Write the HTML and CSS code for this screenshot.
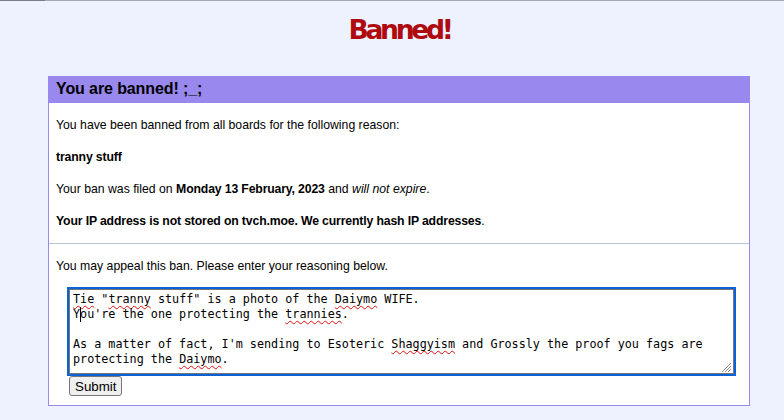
FILE: index.html
```
<!DOCTYPE html>
<html lang="en">
<head>
  <meta charset="UTF-8">
  <meta name="viewport" content="width=device-width, initial-scale=1.0">
  <title>Banned!</title>
  <link rel="stylesheet" href="styles.css">
</head>
<body>
  <div class="page">
    <header class="page-header">
      <h1>Banned!</h1>
    </header>

    <div class="ban">
      <h2>You are banned! ;_;</h2>
      <p>You have been banned from all boards for the following reason:</p>
      <p class="reason">tranny stuff</p>
      <p>Your ban was filed on <strong>Monday 13 February, 2023</strong> and <em>will not expire</em>.</p>
      <p><strong>Your IP address is not stored on tvch.moe. We currently hash IP addresses</strong>.</p>

      <hr>

      <p>You may appeal this ban. Please enter your reasoning below.</p>

      <form class="ban-appeal" onsubmit="return false">
        <div class="appeal-box" role="textbox" aria-multiline="true" contenteditable="true" spellcheck="true"><span class="typo">Tie</span> "<span class="typo">tranny</span> stuff" is a photo of the <span class="typo">Daiymo</span> WIFE.
Y<span class="caret"></span>ou're the one protecting the <span class="typo">trannies</span>.

As a matter of fact, I'm sending to Esoteric <span class="typo">Shaggyism</span> and Grossly the proof you fags are protecting the <span class="typo">Daiymo</span>.</div>
        <svg class="grip" width="12" height="12" viewBox="0 0 12 12">
          <path d="M11 2 L2 11 M11 5 L5 11 M11 8 L8 11" stroke="#8a8a8a" stroke-width="1"/>
        </svg>
        <button type="submit" class="submit-button">Submit</button>
      </form>
    </div>
  </div>
</body>
</html>
```

FILE: styles.css
```
:root {
  --page-bg: #eef2ff;
  --title-red: #af0a0f;
  --ban-purple: #9988ee;
  --rule: #b7c5d9;
  --focus: #0a62d6;
}

html {
  background-color: var(--page-bg);
  border-top: 1px solid #a9a9b6;
}

body {
  margin: 8px;
  margin-top: 7px;
  font-family: Arial, 'Liberation Sans', sans-serif;
  color: #000;
}

body::before {
  content: '';
  position: absolute;
  top: 0;
  left: 0;
  width: 45px;
  height: 1px;
  background: #7c7c86;
}

.page {
  width: 702px;
  margin-left: 40px;
}

.page-header {
  text-align: center;
}

.page-header h1 {
  margin: 6px 0 0;
  padding-left: 1px;
  font-family: 'DejaVu Sans', Tahoma, sans-serif;
  font-size: 26.67px;
  line-height: 32px;
  font-weight: 700;
  letter-spacing: -3.4px;
  color: var(--title-red);
}

.ban {
  margin-top: 30px;
  background-color: #fff;
  border: 1px solid var(--ban-purple);
}

.ban h2 {
  margin: 0;
  padding: 2px 7px 4px;
  height: 20px;
  line-height: 20px;
  font-size: 16px;
  font-weight: 700;
  letter-spacing: -0.1px;
  background-color: var(--ban-purple);
  color: #000;
}

.ban p {
  margin: 12px 0;
  padding: 3px 7px;
  font-size: 12.25px;
  line-height: 14px;
}

.ban strong,
.ban .reason {
  font-weight: 700;
  letter-spacing: -0.15px;
}

.ban hr {
  margin: 1px 0 0;
  border: 0;
  border-top: 1px solid var(--rule);
  height: 0;
}

.ban-appeal {
  position: relative;
  margin: 0 0 9px 20px;
  padding-top: 1px;
}

.appeal-box {
  box-sizing: border-box;
  width: 665px;
  height: 85px;
  padding: 2px 3px;
  border: 1px solid #767676;
  outline: 2px solid var(--focus);
  font-family: 'DejaVu Sans Mono', Consolas, monospace;
  font-size: 11.75px;
  line-height: 15px;
  white-space: pre-wrap;
  overflow: hidden;
  color: #000;
}

.typo {
  text-decoration: underline wavy #e01010;
  text-decoration-thickness: 1px;
  text-underline-offset: 2px;
  text-decoration-skip-ink: none;
}

.caret {
  display: inline-block;
  width: 0;
  height: 15px;
  vertical-align: -4px;
  border-left: 1px solid #000;
  margin-right: -1px;
}

.grip {
  position: absolute;
  left: 651px;
  top: 73px;
}

.submit-button {
  display: block;
  margin-top: 2px;
  padding: 1px 5px;
  height: 20px;
  font-family: Arial, 'Liberation Sans', sans-serif;
  font-size: 13.33px;
  background-color: #efefef;
  border: 1px solid #767676;
  border-radius: 3px;
  color: #000;
}
```
